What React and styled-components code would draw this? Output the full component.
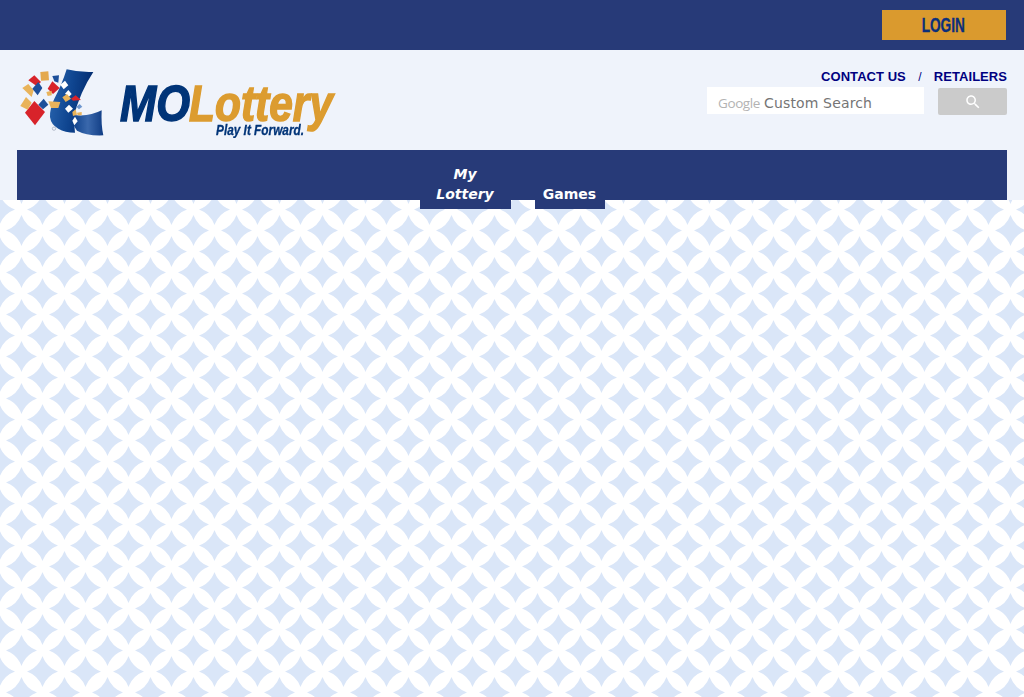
import React from "react";
import styled, { createGlobalStyle } from "styled-components";

const NAVY = "#273a78";
const GOLD = "#da9a2e";

const GlobalStyle = createGlobalStyle`
  html, body {
    margin: 0;
    padding: 0;
  }
  body {
    font-family: "DejaVu Sans", sans-serif;
    background: #fff;
  }
`;

const tiles = [
  { fill: "#d8232a", points: "30,152 58,117 90,150 60,190" },
  { fill: "#e9b35a", points: "16,132 33,105 50,122 38,143" },
  { fill: "#e9b35a", points: "22,78 40,66 56,85 50,105" },
  { fill: "#d8232a", points: "40,55 58,40 78,60 65,72" },
  { fill: "#e4a94e", points: "76,30 100,28 102,55 78,56" },
  { fill: "#1d4f9a", points: "52,80 70,60 82,78 68,100" },
  { fill: "#1d4f9a", points: "70,128 86,110 100,128 84,142" },
  { fill: "#d8232a", points: "98,80 112,58 134,78 114,96" },
  { fill: "#1d4f9a", points: "112,42 132,40 130,62 118,58" },
  { fill: "#e9b35a", points: "94,90 110,86 110,100 98,102" },
  { fill: "#e9b35a", points: "100,118 136,120 130,138 108,138" },
];

const chips = [
  { fill: "#fff", points: "136,68 150,56 160,70 146,82" },
  { fill: "#fff", points: "150,95 160,84 170,96 162,104" },
  { fill: "#e9b35a", points: "142,106 156,96 168,110 152,120" },
  { fill: "#d8232a", points: "168,110 182,100 198,114 174,116" },
  { fill: "#fff", points: "150,140 162,128 174,140 160,152" },
  { fill: "#6f97cf", points: "184,134 194,126 202,134 192,142" },
  { fill: "#e9b35a", points: "172,150 182,142 186,158 174,162" },
  { fill: "#e9b35a", points: "186,152 200,150 200,160 188,160" },
  { fill: "#fff", points: "172,176 180,164 188,178 178,190" },
];

const LotteryLogo = () => (
  <LogoSvg viewBox="0 0 330 80" width="330" height="80">
    <defs>
      <linearGradient id="lBody" x1="0" y1="0" x2="1" y2="0.2">
        <stop offset="0" stopColor="#2a66b0" />
        <stop offset="0.55" stopColor="#0f4590" />
        <stop offset="1" stopColor="#032c70" />
      </linearGradient>
      <linearGradient id="lFoot" x1="0" y1="0" x2="1" y2="0">
        <stop offset="0" stopColor="#0c3f8a" />
        <stop offset="0.5" stopColor="#3a68ac" />
        <stop offset="1" stopColor="#103c84" />
      </linearGradient>
    </defs>
    <g transform="translate(-2 -4) scale(0.3333)">
      <path
        d="M155 22 Q195 32 235 30 Q195 90 176 165 L180 212 Q150 212 130 200 Q108 188 105 165 Q104 140 118 110 Q140 70 155 22Z"
        fill="url(#lBody)"
      />
      <path
        d="M172 158 Q220 166 260 145 Q258 190 265 220 Q215 222 186 206 Q170 186 172 158Z"
        fill="url(#lFoot)"
      />
      {tiles.map((t) => (
        <polygon key={t.points} points={t.points} fill={t.fill} />
      ))}
      {chips.map((t) => (
        <polygon key={t.points} points={t.points} fill={t.fill} />
      ))}
      <circle cx="117" cy="200" r="5" fill="none" stroke="#9aa3b5" strokeWidth="2" />
    </g>
    <LogoWord x="103" y="55" textLength="70" lengthAdjust="spacingAndGlyphs" fill="#003478" stroke="#003478">
      MO
    </LogoWord>
    <LogoWord x="172" y="55" textLength="144" lengthAdjust="spacingAndGlyphs" fill="#dc9c30" stroke="#dc9c30">
      Lottery
    </LogoWord>
    <LogoTag x="199" y="68.5" textLength="88" lengthAdjust="spacingAndGlyphs" fill="#003478" stroke="#003478">
      Play It Forward.
    </LogoTag>
  </LogoSvg>
);

const App = () => {
  return (
    <Page>
      <GlobalStyle />
      <TopBar>
        <LoginButton>
          <LoginLabel>LOGIN</LoginLabel>
        </LoginButton>
      </TopBar>
      <Header>
        <HeaderRow>
          <LotteryLogo />
          <HeaderRight>
            <UtilityLinks>
              <UtilityLink href="#">CONTACT US</UtilityLink>
              <Divider>/</Divider>
              <UtilityLink href="#">RETAILERS</UtilityLink>
            </UtilityLinks>
            <SearchForm>
              <SearchField>
                <GoogleMark>Google</GoogleMark>
                <SearchHint>Custom Search</SearchHint>
              </SearchField>
              <SearchButton type="button" aria-label="search">
                <svg width="18" height="18" viewBox="0 0 24 24" fill="#fff">
                  <path d="M15.5 14h-.79l-.28-.27C15.41 12.59 16 11.11 16 9.5 16 5.91 13.09 3 9.5 3S3 5.91 3 9.5 5.91 16 9.5 16c1.61 0 3.09-.59 4.23-1.57l.27.28v.79l5 4.99L20.49 19l-4.99-5zm-6 0C7.01 14 5 11.99 5 9.5S7.01 5 9.5 5 14 7.01 14 9.5 11.99 14 9.5 14z" />
                </svg>
              </SearchButton>
            </SearchForm>
          </HeaderRight>
        </HeaderRow>
        <NavBar>
          <NavItem $width={91} $italic>
            My Lottery
          </NavItem>
          <NavItem $width={70}>Games</NavItem>
        </NavBar>
      </Header>
      <Main />
    </Page>
  );
};

export default App;

const Page = styled.div`
  min-height: 100vh;
  display: flex;
  flex-direction: column;
`;

const TopBar = styled.div`
  height: 50px;
  box-sizing: border-box;
  padding: 10px 18px 0 0;
  display: flex;
  justify-content: flex-end;
  background: ${NAVY};
`;

const LoginButton = styled.a`
  width: 124px;
  height: 30px;
  display: flex;
  align-items: center;
  justify-content: center;
  background: ${GOLD};
  cursor: pointer;
`;

const LoginLabel = styled.span`
  display: inline-block;
  color: #0b2f7c;
  font-family: "Liberation Sans", sans-serif;
  font-weight: 700;
  font-size: 21px;
  -webkit-text-stroke: 0.3px #0b2f7c;
  transform: translateX(-1px) scaleX(0.65);
`;

const Header = styled.header`
  position: relative;
  z-index: 1;
  height: 150px;
  box-sizing: border-box;
  padding: 0 17px;
  background: #eff3fb;
`;

const HeaderRow = styled.div`
  height: 100px;
  display: flex;
  justify-content: space-between;
`;

const LogoSvg = styled.svg`
  display: block;
  margin-top: 16px;
  flex: none;
  filter: blur(0.35px);
`;

const LogoWord = styled.text`
  font-family: "Liberation Sans", sans-serif;
  font-weight: 700;
  font-style: italic;
  font-size: 50px;
  stroke-width: 1.5px;
`;

const LogoTag = styled.text`
  font-family: "Liberation Sans", sans-serif;
  font-weight: 700;
  font-style: italic;
  font-size: 14px;
  stroke-width: 0.3px;
`;

const HeaderRight = styled.div`
  display: flex;
  flex-direction: column;
  align-items: flex-end;
  padding-top: 19px;
`;

const UtilityLinks = styled.div`
  display: flex;
  align-items: center;
  height: 15px;
  font-family: "Liberation Sans", sans-serif;
  font-size: 13px;
`;

const UtilityLink = styled.a`
  color: #000080;
  font-weight: 700;
  letter-spacing: 0.05px;
  text-decoration: none;
`;

const Divider = styled.span`
  width: 28px;
  text-align: center;
  color: #000080;
  font-size: 12px;
`;

const SearchForm = styled.form`
  display: flex;
  align-items: flex-start;
  gap: 14px;
  margin: 3px 0 0;
`;

const SearchField = styled.div`
  width: 217px;
  height: 27px;
  box-sizing: border-box;
  padding: 4px 0 0 11px;
  display: flex;
  align-items: center;
  gap: 4px;
  background: #fff;
`;

const GoogleMark = styled.span`
  font-family: "Open Sans", sans-serif;
  font-size: 13.5px;
  letter-spacing: -0.4px;
  color: #b3b3b3;
`;

const SearchHint = styled.span`
  font-family: "DejaVu Sans", sans-serif;
  font-size: 14px;
  letter-spacing: 0.15px;
  color: #757575;
`;

const SearchButton = styled.button`
  width: 69px;
  height: 27px;
  margin-top: 1px;
  padding: 0;
  border: 0;
  border-radius: 2px;
  display: flex;
  align-items: center;
  justify-content: center;
  background: #cbcbcb;
`;

const NavBar = styled.nav`
  height: 50px;
  display: flex;
  justify-content: center;
  align-items: flex-end;
  gap: 24px;
  background: ${NAVY};
`;

const NavItem = styled.a`
  width: ${(p) => p.$width}px;
  box-sizing: border-box;
  margin-bottom: -9px;
  padding: 0 8px 5px;
  background: ${NAVY};
  color: #fff;
  font-size: 14px;
  font-weight: 700;
  font-style: ${(p) => (p.$italic ? "italic" : "normal")};
  line-height: 20px;
  text-align: center;
  cursor: pointer;
`;

const Main = styled.main`
  flex: 1;
  background-color: #fff;
  background-image: url("data:image/svg+xml,%3Csvg xmlns='http://www.w3.org/2000/svg' width='43' height='42'%3E%3Cdefs%3E%3Cpath id='s' d='M0-15.5A26 26 0 0 0 15.5 0 26 26 0 0 0 0 15.5 26 26 0 0 0-15.5 0 26 26 0 0 0 0-15.5Z' fill='%23dae6f8'/%3E%3C/defs%3E%3Cuse href='%23s' x='21.5' y='30.5'/%3E%3Cuse href='%23s' x='21.5' y='-11.5'/%3E%3Cuse href='%23s' x='-0.5' y='9.5'/%3E%3Cuse href='%23s' x='42.5' y='9.5'/%3E%3Cuse href='%23s' x='-0.5' y='51.5'/%3E%3Cuse href='%23s' x='42.5' y='51.5'/%3E%3C/svg%3E");
  background-size: 43px 42px;
`;
